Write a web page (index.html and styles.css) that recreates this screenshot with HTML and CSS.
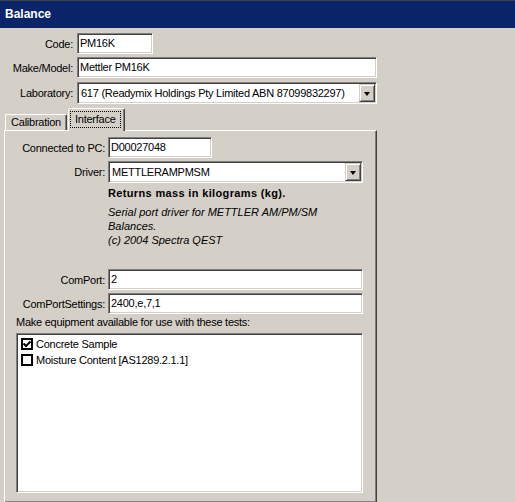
FILE: index.html
```html
<!DOCTYPE html>
<html>
<head>
<meta charset="utf-8">
<title>Balance</title>
<link rel="stylesheet" href="styles.css">
</head>
<body>
<div class="titlebar">Balance</div>
<div class="form">
  <div class="row row-code">
    <label class="lbl">Code:</label>
    <div class="edit w-code">PM16K</div>
  </div>
  <div class="row row-make">
    <label class="lbl">Make/Model:</label>
    <div class="edit w-full">Mettler PM16K</div>
  </div>
  <div class="row row-lab">
    <label class="lbl">Laboratory:</label>
    <div class="combo w-full">
      <span class="combo-text">617 (Readymix Holdings Pty Limited ABN 87099832297)</span>
      <span class="combo-btn"><span class="tri"></span></span>
    </div>
  </div>
</div>
<div class="tabs">
  <div class="tab">Calibration</div>
  <div class="tab tab-active"><span class="focus">Interface</span></div>
</div>
<div class="panel">
  <div class="prow">
    <label class="plbl">Connected to PC:</label>
    <div class="edit w-pc">D00027048</div>
  </div>
  <div class="prow prow-driver">
    <label class="plbl">Driver:</label>
    <div class="combo w-pfull">
      <span class="combo-text">METTLERAMPMSM</span>
      <span class="combo-btn"><span class="tri"></span></span>
    </div>
  </div>
  <div class="desc">
    <div class="desc-bold">Returns mass in kilograms (kg).</div>
    <div class="desc-ital">Serial port driver for METTLER AM/PM/SM<br>Balances.<br>(c) 2004 Spectra QEST</div>
  </div>
  <div class="prow prow-comport">
    <label class="plbl">ComPort:</label>
    <div class="edit w-pfull">2</div>
  </div>
  <div class="prow prow-settings">
    <label class="plbl">ComPortSettings:</label>
    <div class="edit w-pfull">2400,e,7,1</div>
  </div>
  <div class="avail">Make equipment available for use with these tests:</div>
  <div class="listbox">
    <div class="item">
      <span class="check"><svg width="10" height="10" viewBox="0 0 10 10"><polyline points="1.5,4.5 4,7 8.5,2.5" fill="none" stroke="#000" stroke-width="2"/></svg></span>
      <span>Concrete Sample</span>
    </div>
    <div class="item">
      <span class="check"></span>
      <span>Moisture Content [AS1289.2.1.1]</span>
    </div>
  </div>
</div>
</body>
</html>
```
FILE: styles.css
```css
* { box-sizing: border-box; }
html, body {
  margin: 0;
  padding: 0;
}
body {
  width: 515px;
  height: 502px;
  overflow: hidden;
  background: #d4d0c8;
  font-family: "Liberation Sans", Arial, sans-serif;
  font-size: 11px;
  letter-spacing: -0.25px;
  color: #000;
}
.titlebar {
  height: 28px;
  border-top: 1px solid #404040;
  background: #0a246a;
  color: #fff;
  font-weight: bold;
  font-size: 12px;
  letter-spacing: 0;
  line-height: 27px;
  padding-left: 5px;
}
.form {
  padding-top: 5px;
}
.row {
  display: flex;
  align-items: center;
}
.row-make { margin-top: 3px; }
.row-lab { margin-top: 4px; }
.lbl {
  width: 73px;
  margin-right: 4px;
  text-align: right;
  white-space: nowrap;
}
.edit {
  height: 21px;
  background: #fff;
  border: 1px solid;
  border-color: #808080 #fff #fff #808080;
  box-shadow: inset 1px 1px 0 #404040, inset -1px -1px 0 #d4d0c8;
  padding-left: 2px;
  line-height: 19px;
  white-space: nowrap;
  overflow: hidden;
}
.w-code { width: 76px; }
.w-full { width: 300px; }
.w-pc { width: 104px; }
.w-pfull { width: 255px; }
.combo {
  height: 22px;
  background: #fff;
  border: 1px solid;
  border-color: #808080 #fff #fff #808080;
  box-shadow: inset 1px 1px 0 #404040, inset -1px -1px 0 #d4d0c8;
  padding: 1px;
  display: flex;
  align-items: stretch;
}
.combo-text {
  flex: 1;
  padding-left: 2px;
  line-height: 18px;
  white-space: nowrap;
  overflow: hidden;
}
.combo-btn {
  width: 16px;
  background: #d4d0c8;
  border: 1px solid;
  border-color: #d4d0c8 #404040 #404040 #d4d0c8;
  box-shadow: inset 1px 1px 0 #fff, inset -1px -1px 0 #808080;
  display: flex;
  align-items: center;
  justify-content: center;
}
.tri {
  width: 0;
  height: 0;
  border-left: 3.5px solid transparent;
  border-right: 3.5px solid transparent;
  border-top: 4px solid #000;
  margin-top: 1px;
}
.tabs {
  display: flex;
  align-items: flex-end;
  height: 24px;
  margin-top: 2px;
  padding-left: 5px;
}
.tab {
  width: 62px;
  height: 16px;
  margin-right: 1px;
  border-top: 1px solid #fff;
  border-left: 1px solid #fff;
  border-right: 1px solid #404040;
  border-top-left-radius: 2px;
  border-top-right-radius: 2px;
  box-shadow: inset -1px 0 0 #808080;
  text-align: center;
  line-height: 15px;
  white-space: nowrap;
}
.tab-active {
  position: relative;
  z-index: 1;
  width: 57px;
  height: 23px;
  margin-bottom: -1px;
  background: #d4d0c8;
  text-align: left;
  padding: 2px 0 0 1px;
  line-height: 15px;
}
.focus {
  display: inline-block;
  border: 1px dotted #000;
  padding: 0 4px 0 4px;
  line-height: 15px;
}
.panel {
  margin-left: 4px;
  width: 373px;
  height: 373px;
  border-top: 1px solid #fff;
  border-left: 1px solid #fff;
  border-right: 1px solid #404040;
  border-bottom: 1px solid #404040;
  box-shadow: inset -1px -1px 0 #808080;
  padding: 6px 13px 0 11px;
}
.prow {
  display: flex;
  align-items: center;
}
.prow-driver { margin-top: 3px; }
.prow-comport { margin-top: 22px; }
.prow-settings { margin-top: 3px; }
.plbl {
  width: 89px;
  margin-right: 3px;
  text-align: right;
  white-space: nowrap;
}
.desc {
  margin-left: 92px;
}
.desc-bold {
  margin-top: 3px;
  font-weight: bold;
  letter-spacing: 0.35px;
  line-height: 14px;
}
.desc-ital {
  margin-top: 5px;
  font-style: italic;
  letter-spacing: 0;
  line-height: 14px;
}
.avail {
  margin-top: 1px;
  line-height: 14px;
  white-space: nowrap;
}
.listbox {
  margin-top: 4px;
  width: 347px;
  height: 160px;
  background: #fff;
  border: 1px solid;
  border-color: #808080 #fff #fff #808080;
  box-shadow: inset 1px 1px 0 #404040, inset -1px -1px 0 #d4d0c8;
  padding: 2px 0 0 4px;
}
.item {
  display: flex;
  align-items: center;
  height: 16px;
  gap: 3px;
  white-space: nowrap;
}
.check {
  width: 12px;
  height: 12px;
  border: 1px solid #000;
  box-shadow: inset 0 0 0 1px #000;
  background: #fff;
  display: flex;
  align-items: center;
  justify-content: center;
}
.check svg { display: block; }
```
